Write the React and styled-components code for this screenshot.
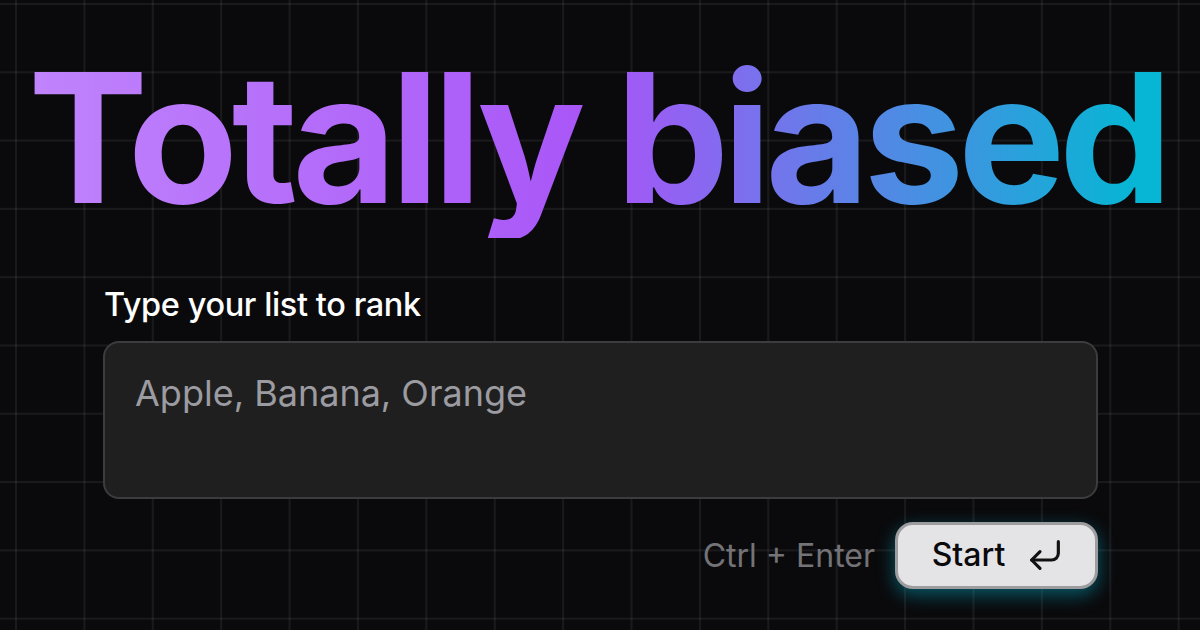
import React from "react";
import styled, { createGlobalStyle } from "styled-components";

const Global = createGlobalStyle`
  html, body { margin: 0; padding: 0; background: #0a0a0c; }
  body { font-family: Inter, "Noto Sans", sans-serif; }
`;

const Page = styled.div`
  width: 1200px;
  height: 630px;
  overflow: hidden;
  box-sizing: border-box;
  background-color: #0a0a0c;
  background-image:
    linear-gradient(to right, rgba(255,255,255,0.065) 2px, transparent 2px),
    linear-gradient(to bottom, rgba(255,255,255,0.065) 2px, transparent 2px);
  background-size: 68.4px 68.3px;
  background-position: 15px 3px;
  display: flex;
  flex-direction: column;
  align-items: center;
`;

const Title = styled.h1`
  margin: 38px 0 0;
  font-family: Inter, sans-serif;
  font-weight: 700;
  font-size: 180px;
  line-height: 200px;
  letter-spacing: -6.3px;
  padding-right: 6px;
  background: linear-gradient(to right, #c084fc, #a855f7 50%, #06b6d4 97%);
  -webkit-background-clip: text;
  background-clip: text;
  color: transparent;
  white-space: nowrap;
`;

const Form = styled.div`
  width: 995px;
  margin: 47px 0 0 1px;
  display: flex;
  flex-direction: column;
`;

const Label = styled.label`
  font-size: 32.5px;
  font-weight: 500;
  color: #ffffff;
  letter-spacing: -0.4px;
  line-height: 40px;
  padding-left: 1px;
`;

const Area = styled.div`
  margin-top: 16px;
  height: 158px;
  box-sizing: border-box;
  border: 2px solid #3c3c3f;
  border-radius: 16px;
  background: #1f1f20;
  padding: 26px 30px;
  font-size: 36px;
  line-height: 48px;
  color: #9b9ba1;
`;

const Actions = styled.div`
  margin-top: 23px;
  display: flex;
  justify-content: flex-end;
  align-items: center;
  gap: 20px;
`;

const Hint = styled.span`
  font-size: 32px;
  color: #737378;
`;

const Button = styled.button`
  height: 67px;
  width: 203px;
  box-sizing: border-box;
  border: 3px solid #9d9d9f;
  border-radius: 18px;
  background: #e4e4e7;
  color: #0a0a0c;
  font-family: Inter, sans-serif;
  font-size: 32px;
  font-weight: 500;
  display: flex;
  align-items: center;
  justify-content: center;
  gap: 20px;
  box-shadow: 0 6px 18px rgba(6, 182, 212, 0.45);
  padding: 0 0 2px 4px;
`;

export default function App() {
  return (
    <>
      <Global />
      <Page>
        <Title>Totally biased</Title>
        <Form>
          <Label>Type your list to rank</Label>
          <Area>Apple, Banana, Orange</Area>
          <Actions>
            <Hint>Ctrl + Enter</Hint>
            <Button>
              Start
              <svg width="40" height="40" viewBox="0 0 24 24" fill="none" stroke="#111" strokeWidth="1.9" strokeLinecap="round" strokeLinejoin="round">
                <polyline points="9 10 4 15 9 20" />
                <path d="M20 4v7a4 4 0 0 1-4 4H4" />
              </svg>
            </Button>
          </Actions>
        </Form>
      </Page>
    </>
  );
}
